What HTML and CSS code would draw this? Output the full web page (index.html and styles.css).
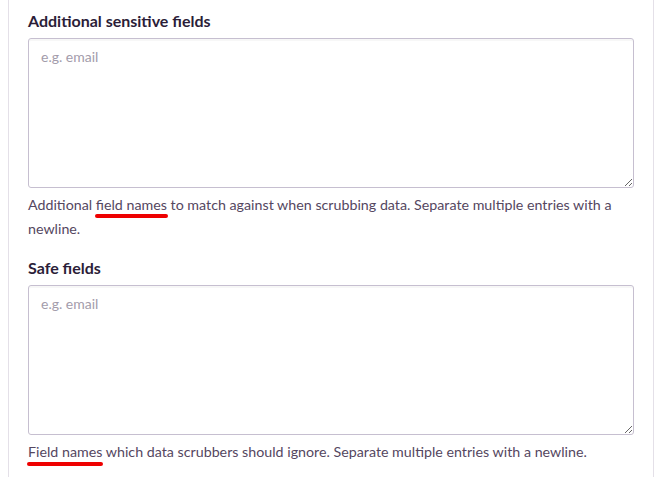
FILE: index.html
```html
<!DOCTYPE html>
<html>
<head>
<meta charset="utf-8">
<link rel="stylesheet" href="styles.css">
</head>
<body>
<div class="panel">
  <div class="field">
    <label class="label">Additional sensitive fields</label>
    <textarea class="input" placeholder="e.g. email"></textarea>
    <p class="help">Additional <span class="mark">field names</span> to match against when scrubbing data. Separate multiple entries with a newline.</p>
  </div>
  <div class="field">
    <label class="label">Safe fields</label>
    <textarea class="input" placeholder="e.g. email"></textarea>
    <p class="help"><span class="mark mark-low">Field names</span> which data scrubbers should ignore. Separate multiple entries with a newline.</p>
  </div>
</div>
</body>
</html>
```

FILE: styles.css
```css
html, body {
  margin: 0;
  padding: 0;
  background: #fff;
}
body {
  font-family: Lato, "Noto Sans", sans-serif;
  height: 477px;
  overflow: hidden;
}
.panel {
  margin-left: 8px;
  width: 646px;
  min-height: 477px;
  box-sizing: border-box;
  border-left: 1px solid #e4e0e8;
  border-right: 1px solid #e4e0e8;
  padding: 11px 21px 0 19px;
  display: flex;
  flex-direction: column;
  gap: 17px;
}
.field {
  display: flex;
  flex-direction: column;
}
.label {
  font-size: 16px;
  font-weight: bold;
  line-height: 20px;
  color: #2b1d38;
  margin-bottom: 7px;
}
.input {
  display: block;
  width: 606px;
  height: 150px;
  box-sizing: border-box;
  border: 1px solid #c6bfd0;
  border-radius: 3px;
  box-shadow: inset 0 2px 0 rgba(0,0,0,0.03);
  padding: 9px 12px;
  font-family: Lato, "Noto Sans", sans-serif;
  font-size: 14px;
  line-height: 18px;
  color: #2b1d38;
  background: #fff;
  margin: 0;
}
.input::placeholder {
  color: #a39cab;
}
.help {
  margin: 5px 0 0;
  font-size: 14.25px;
  line-height: 24px;
  color: #55475f;
}
.mark {
  position: relative;
}
.mark::after {
  content: "";
  position: absolute;
  left: -1px;
  right: -1px;
  bottom: -5px;
  height: 4px;
  border-radius: 2px;
  background: #ee0000;
}
.mark-low::after {
  bottom: -6px;
}
```
